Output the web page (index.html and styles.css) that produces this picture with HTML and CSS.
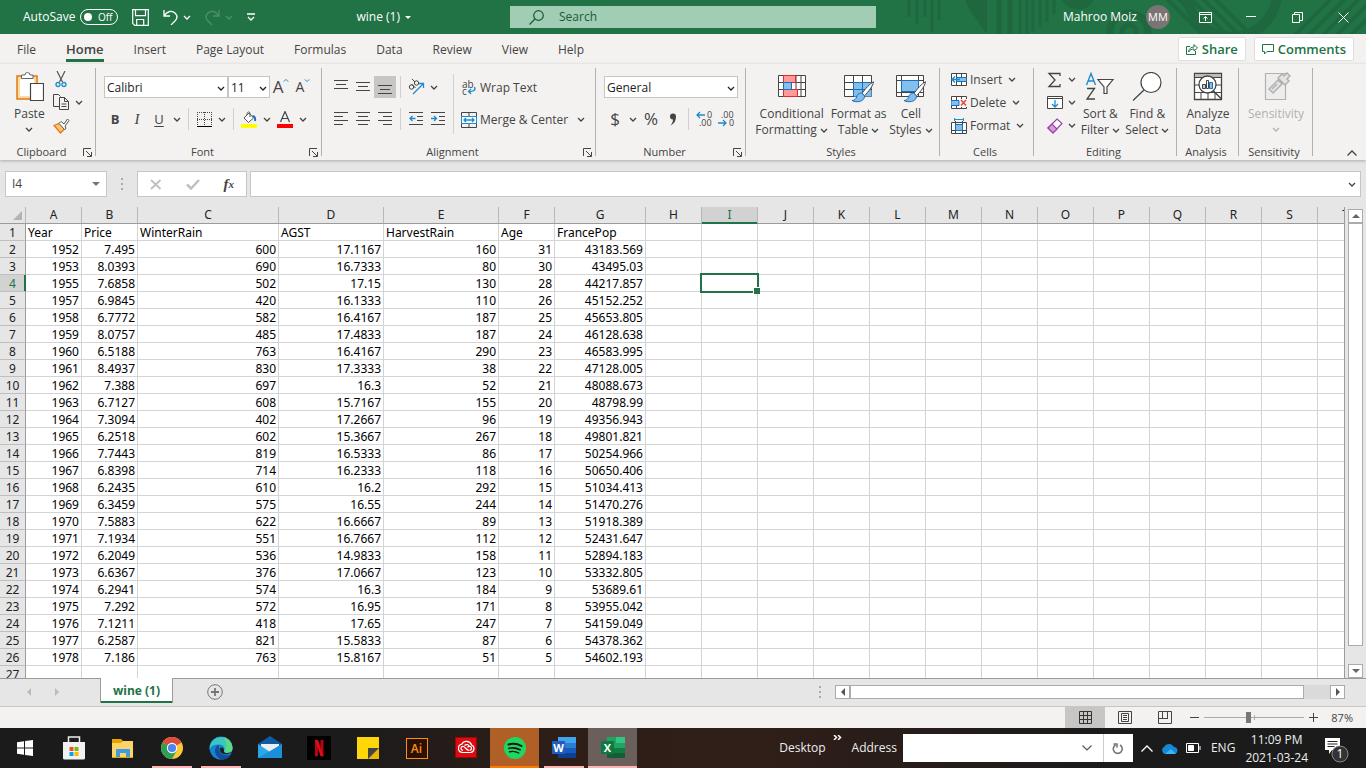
FILE: index.html
```html
<!DOCTYPE html>
<html lang="en">

<head>
    <meta charset="UTF-8">
    <meta name="viewport" content="width=device-width, initial-scale=1.0">
    <title>wine (1) - Excel</title>
    <link rel="stylesheet" href="styles.css">
    <script src="sheet.js" defer></script>
</head>

<body>
    <svg class="sprite" aria-hidden="true">
        <symbol id="chev" viewBox="0 0 8 5"><path d="M1 1l3 3 3-3" fill="none" stroke="currentColor" stroke-width="1.3"/></symbol>
        <symbol id="launch" viewBox="0 0 9 9"><path d="M.5 8V.5H8M3 3l5 5M8.5 4v4.5H4" fill="none" stroke="currentColor"/></symbol>
        <symbol id="brush" viewBox="0 0 24 22"><path d="M22.5.8C19 2.5 14 8 11 12.5l2.5 2.3C17.5 10.5 22 5 22.5.8z" fill="#fff" stroke="#444"/><path d="M10.5 12c-3 0-4.500 2-5 4S3.5 19.5 1 19.5c3 2 12 2.3 12.7-4.500z" fill="#83beec" stroke="#1b6fb8"/></symbol>
    </svg>

    <header class="titlebar">
        <svg class="titlebar-art" width="466" height="34" viewBox="900 0 466 34" aria-hidden="true">
            <g fill="none" stroke="#1f673e">
                <path d="M909 0v17M917 0v24M925 0v17M932 0v32M939 0v20" stroke-width="3"/>
                <path d="M965 0c4 10 12 20 22 34V0z" fill="#1f673e" stroke="none"/>
                <path d="M999 0v34M1010 0v34" stroke-width="5"/>
                <path d="M1020 0v34M1027 0v34M1033 0v32M1040 0v27M1047 0v22M1054 0v14" stroke-width="3"/>
                <path d="M1062 0h31c-2 11-24 14-31 0z" fill="#1f673e" stroke="none"/>
                <circle cx="1129" cy="32" r="19" stroke-width="7"/>
                <circle cx="1129" cy="32" r="7" stroke-width="5"/>
                <path d="M1166-2l38 38M1178-2l38 38M1190-2l38 38M1202-2l38 38M1214-2l38 38" stroke-width="4"/>
                <circle cx="1232" cy="-8" r="45" stroke-width="10"/>
                <path d="M1294 36l38-38M1308 36l38-38M1322 36l38-38M1336 36l38-38M1350 36l38-38" stroke-width="4"/>
            </g>
        </svg>
        <div class="title-left">
            <label class="autosave">AutoSave <input type="checkbox" class="toggle"><span class="toggle-off">Off</span></label>
            <button class="tb" aria-label="Save"><svg width="17" height="17" fill="none" stroke="currentColor" stroke-width="1.2"><path d="M.7.7h15.600v15.600H2.700l-2-2zM3.500.7v6h10v-6M4.700 16v-5.500h7V16"/></svg></button>
            <button class="tb" aria-label="Undo"><svg width="15" height="16" fill="none" stroke="currentColor" stroke-width="1.3"><path d="M1 1v6h6M1 7C4 2 9 1 12 4s2 6 0 8l-4 4"/></svg><svg class="chev"><use href="#chev"/></svg></button>
            <button class="tb faded" aria-label="Redo"><svg width="15" height="16" fill="none" stroke="currentColor" stroke-width="1.3"><path d="M14 1v6H8M14 7C11 2 6 1 3 4s-2 6 0 8l4 4"/></svg><svg class="chev"><use href="#chev"/></svg></button>
            <button class="tb" aria-label="Customize Quick Access Toolbar"><svg width="8" height="8" fill="none" stroke="currentColor" stroke-width="1.3"><path d="M0 1h8M1 4l3 3 3-3"/></svg></button>
            <button class="tb doc">wine (1) <svg width="6" height="3"><path d="M0 0h6L3 3z" fill="currentColor"/></svg></button>
        </div>
        <label class="search">
            <svg width="15" height="15" fill="none" stroke="#185c37" stroke-width="1.2"><circle cx="9.5" cy="5.5" r="4.8"/><path d="M6 9L.5 14.5"/></svg>
            <input type="search" placeholder="Search" aria-label="Search">
        </label>
        <div class="title-right">
            <span>Mahroo Moiz</span>
            <span class="avatar">MM</span>
            <button class="tb win" aria-label="Ribbon Display Options"><svg width="13" height="11" fill="none" stroke="currentColor"><path d="M.5.5h12v10H.5zM.5 2.500h12M6.500 9V4.500M4.500 6.500l2-2 2 2"/></svg></button>
            <button class="tb win" aria-label="Minimize"><svg width="10" height="2"><path d="M0 .5h10" stroke="currentColor"/></svg></button>
            <button class="tb win" aria-label="Restore"><svg width="11" height="11" fill="none" stroke="currentColor"><path d="M.5 2.500h7v8h-7zM2.500 2.500v-2h8v8h-3"/></svg></button>
            <button class="tb win" aria-label="Close"><svg width="11" height="11" stroke="currentColor"><path d="M.5.5l10 10M10.500.5l-10 10"/></svg></button>
        </div>
    </header>

    <nav class="tabs">
        <a href="#">File</a>
        <a href="#" class="active">Home</a>
        <a href="#">Insert</a>
        <a href="#">Page Layout</a>
        <a href="#">Formulas</a>
        <a href="#">Data</a>
        <a href="#">Review</a>
        <a href="#">View</a>
        <a href="#">Help</a>
        <div class="tab-actions">
            <button><svg width="12" height="12" fill="none" stroke="currentColor"><path d="M4 3.500H.5v8h9V8M2.500 9C3 5.500 5 4 8 4V1.500L11.500 5 8 8V6C5.500 6 4 7 2.500 9z"/></svg>Share</button>
            <button><svg width="12" height="11" fill="none" stroke="currentColor"><path d="M.5.5h11v7H5l-2.500 2.500V7.500h-2z"/></svg>Comments</button>
        </div>
    </nav>

    <section class="ribbon">
        <div class="group clipboard">
            <div class="group-body top">
                <button class="big"><svg width="30" height="32" fill="none"><path d="M3 4h20v23H3z" fill="#fbdc9c" stroke="#e07a1a" stroke-width="1.5"/><path d="M6 7h14v17H6z" fill="#fff"/><path d="M7.500 6.500V3H11a2.500 2.500 0 015 0h3v3.500z" fill="#fff" stroke="#666"/><path d="M16.500 11.500h13v17h-13z" fill="#fff" stroke="#444" stroke-width="1.2"/></svg>
                    <span>Paste</span><svg class="chev under"><use href="#chev"/></svg></button>
                <div class="stack">
                    <button aria-label="Cut"><svg width="16" height="17" fill="none"><path d="M4 0l5.500 11M12 0L6.500 11" stroke="#555" stroke-width="1.2"/><circle cx="5" cy="13.5" r="2" stroke="#1e8bcd" stroke-width="1.3"/><circle cx="11" cy="13.5" r="2" stroke="#1e8bcd" stroke-width="1.3"/></svg></button>
                    <button aria-label="Copy"><svg width="17" height="17" fill="none" stroke="#444"><path d="M6 12.500H.5V.5h5l2 2M6.500 3.500h5l4 4v8h-9zM11.500 3.500v4h4M8.500 10h5M8.500 12.500h5"/></svg><svg class="chev"><use href="#chev"/></svg></button>
                    <button aria-label="Format Painter"><svg width="17" height="16" fill="none"><path d="M1 7.500L7 5l5 5.500L7.500 15z" fill="#fbc46d" stroke="#e07a1a" stroke-width="1.3"/><path d="M6 5.500l2-2 3 2.500L14.500 1l1.500 1.500L12 8l1 2.500-1.500 1z" fill="#fff" stroke="#555"/></svg></button>
                </div>
            </div>
            <div class="group-name"><span>Clipboard</span><button aria-label="Clipboard options"><svg class="launch"><use href="#launch"/></svg></button></div>
        </div>

        <div class="group font">
            <div class="group-body rows">
                <div class="row">
                    <span class="pick family"><select aria-label="Font"><option>Calibri</option></select><svg class="chev"><use href="#chev"/></svg></span>
                    <span class="pick size"><select aria-label="Font size"><option>11</option></select><svg class="chev"><use href="#chev"/></svg></span>
                    <button class="ib" aria-label="Increase font size"><span class="grow">A</span><svg class="chev up"><use href="#chev"/></svg></button>
                    <button class="ib" aria-label="Decrease font size"><span class="shrink">A</span><svg class="chev blue"><use href="#chev"/></svg></button>
                </div>
                <div class="row">
                    <button class="ib bold">B</button>
                    <button class="ib italic">I</button>
                    <button class="ib underline">U</button>
                    <button class="dd" aria-label="Underline styles"><svg class="chev"><use href="#chev"/></svg></button>
                    <i class="sep"></i>
                    <button class="ib" aria-label="Borders"><svg width="15" height="15" fill="none" stroke="#444"><path d="M0 .5h15M0 7.500h15M.5 0v14M7.500 0v14M14.500 0v14" stroke-dasharray="1 1"/><path d="M0 14.500h15" stroke="#000"/></svg></button>
                    <button class="dd" aria-label="Border styles"><svg class="chev"><use href="#chev"/></svg></button>
                    <i class="sep"></i>
                    <button class="ib" aria-label="Fill color"><svg width="16" height="17" fill="none"><path d="M3 7l5-5 4.500 5-5 4.500zM6 4c0-4 3-4 3-1v3" fill="#fff" stroke="#555"/><path d="M11.500 5c2 0 3 2 2.500 5" stroke="#1b6fb8" stroke-width="2"/><path d="M0 13h16v4H0z" fill="#ff0"/></svg></button>
                    <button class="dd" aria-label="Fill colors"><svg class="chev"><use href="#chev"/></svg></button>
                    <button class="ib" aria-label="Font color"><svg width="16" height="17" fill="none"><path d="M3.500 11L8 .5 12.500 11M5 7.500h6" stroke="#444" stroke-width="1.2"/><path d="M0 13h16v4H0z" fill="#f00"/></svg></button>
                    <button class="dd" aria-label="Font colors"><svg class="chev"><use href="#chev"/></svg></button>
                </div>
            </div>
            <div class="group-name"><span>Font</span><button aria-label="Font options"><svg class="launch"><use href="#launch"/></svg></button></div>
        </div>

        <div class="group alignment">
            <div class="group-body">
                <div class="rows">
                    <div class="row">
                        <button class="ib" aria-label="Top align"><svg class="lines"><path d="M0 .5h14M2 4.500h10M0 8.500h14"/></svg></button>
                        <button class="ib" aria-label="Middle align"><svg class="lines"><path d="M0 2.500h14M2 6.500h10M0 10.500h14"/></svg></button>
                        <button class="ib on" aria-label="Bottom align"><svg class="lines"><path d="M0 5.500h14M2 9.500h10M0 13.500h14"/></svg></button>
                        <i class="sep"></i>
                        <button class="ib" aria-label="Orientation"><svg width="17" height="16" fill="none"><path d="M5 15L15 5M11 4.500h4.500V9" stroke="#1e8bcd" stroke-width="1.3"/><g stroke="#444"><circle cx="3.5" cy="8" r="2.2"/><path d="M3.500 5l4 4"/><circle cx="8.5" cy="4" r="2.2"/><path d="M4 0l3 3"/></g></svg></button>
                        <button class="dd" aria-label="Orientation styles"><svg class="chev"><use href="#chev"/></svg></button>
                    </div>
                    <div class="row">
                        <button class="ib" aria-label="Align left"><svg class="lines"><path d="M0 .5h14M0 4.500h9M0 8.500h14M0 12.500h9"/></svg></button>
                        <button class="ib" aria-label="Center"><svg class="lines"><path d="M0 .5h14M2 4.500h10M0 8.500h14M2 12.500h10"/></svg></button>
                        <button class="ib" aria-label="Align right"><svg class="lines"><path d="M0 .5h14M5 4.500h9M0 8.500h14M5 12.500h9"/></svg></button>
                        <i class="sep"></i>
                        <button class="ib" aria-label="Decrease indent"><svg class="lines"><path d="M0 .5h14M8 4.500h6M8 8.500h6M0 12.500h14"/><path d="M6.500 6.500H1M3.500 4L1 6.500 3.500 9" class="b"/></svg></button>
                        <button class="ib" aria-label="Increase indent"><svg class="lines"><path d="M0 .5h14M8 4.500h6M8 8.500h6M0 12.500h14"/><path d="M0 6.500h5.500M3 4l2.500 2.500L3 9" class="b"/></svg></button>
                    </div>
                </div>
                <i class="sep tall"></i>
                <div class="rows">
                    <button class="wide"><svg class="glyphs" width="16" height="16"><text class="abc"><tspan x="1" y="8">ab</tspan><tspan x="1" y="15">c</tspan></text><path d="M13.500 7c1.500 3-1 5-6 4.500M10 9l-2.500 2.500L10 14" fill="none" stroke="#1e8bcd" stroke-width="1.3"/></svg>Wrap Text</button>
                    <button class="wide"><svg width="16" height="16" fill="none" stroke="#444"><path d="M.5.5h15v15H.5zM8 0v4M8 12v4"/><path d="M.5 4.500h15v7H.5z" fill="#fff" stroke="#1e8bcd"/><path d="M3 8h10M5 6L3 8l2 2M11 6l2 2-2 2" stroke="#1e8bcd" stroke-width="1.3"/></svg>Merge &amp; Center<svg class="chev"><use href="#chev"/></svg></button>
                </div>
            </div>
            <div class="group-name"><span>Alignment</span><button aria-label="Alignment options"><svg class="launch"><use href="#launch"/></svg></button></div>
        </div>

        <div class="group number">
            <div class="group-body rows">
                <span class="pick format"><select aria-label="Number format"><option>General</option></select><svg class="chev"><use href="#chev"/></svg></span>
                <div class="row">
                    <button class="ib sym">$</button>
                    <button class="dd" aria-label="Currency"><svg class="chev"><use href="#chev"/></svg></button>
                    <button class="ib sym">%</button>
                    <button class="ib" aria-label="Comma style"><svg width="8" height="13"><path d="M1 3.500a3 3 0 016 0C7 8 5 11 1.500 12.500 3.500 10 4 8 4 6.500a3 3 0 01-3-3z" fill="#444"/></svg></button>
                    <i class="sep"></i>
                    <button class="ib" aria-label="Increase decimal"><svg class="glyphs" width="16" height="16"><text class="dec"><tspan x="11" y="7">0</tspan><tspan x="3" y="15">.00</tspan></text><path d="M9 4H1M4 1L1 4l3 3" class="arrow"/></svg></button>
                    <button class="ib" aria-label="Decrease decimal"><svg class="glyphs" width="16" height="16"><text class="dec"><tspan x="3" y="7">.00</tspan><tspan x="11" y="15">0</tspan></text><path d="M0 12h8M5 9l3 3-3 3" class="arrow"/></svg></button>
                </div>
            </div>
            <div class="group-name"><span>Number</span><button aria-label="Number options"><svg class="launch"><use href="#launch"/></svg></button></div>
        </div>

        <div class="group styles">
            <div class="group-body top">
                <button class="big"><svg width="30" height="32" fill="none"><path d="M1.500 3.500h27v21h-27z" fill="#fff" stroke="#444"/><path d="M6.500 3v22M19 3v22M24 3v22M1 10.500h28M1 17.500h28" stroke="#444"/><path d="M6.500 3.500h12v7h-12zM6.500 17.500h14v7h-14z" fill="#ff9a9a" stroke="#e02b2b"/><path d="M6.500 10.500h8v7h-8z" fill="#83beec" stroke="#1b6fb8"/></svg>
                    <span>Conditional<br>Formatting <svg class="chev"><use href="#chev"/></svg></span></button>
                <button class="big"><svg width="32" height="32" fill="none"><path d="M1.500 3.500h27v21h-27z" fill="#fff" stroke="#444"/><path d="M10.500 10.500h18v14h-18z" fill="#83beec"/><path d="M10.500 3v22M19.500 3v22M1 10.500h28M1 17.500h28" stroke="#444"/><path d="M10.500 24V10.500h18M19.500 10v14M10 17.500h18" stroke="#1b6fb8"/><use href="#brush" x="8" y="9" width="24" height="22"/></svg>
                    <span>Format as<br>Table <svg class="chev"><use href="#chev"/></svg></span></button>
                <button class="big"><svg width="32" height="32" fill="none"><path d="M1.500 3.500h27v21h-27z" fill="#fff" stroke="#444"/><path d="M6.500 3v22M23.500 3v22M1 8.500h28M1 20.500h28" stroke="#444"/><path d="M6.500 8.500h17v11h-17z" fill="#83beec" stroke="#1b6fb8"/><use href="#brush" x="8" y="9" width="24" height="22"/></svg>
                    <span>Cell<br>Styles <svg class="chev"><use href="#chev"/></svg></span></button>
            </div>
            <div class="group-name"><span>Styles</span></div>
        </div>

        <div class="group cells">
            <div class="group-body stack">
                <button><svg width="16" height="16" fill="none"><path d="M.5 1.500h15v12H.5zM5.500 1v13M10.500 1v13" fill="#fff" stroke="#444"/><path d="M5.500 5.500h10v4h-10z" fill="#83beec" stroke="#1b6fb8"/><path d="M9 7.500H1M4 4.500l-3 3 3 3" stroke="#1e8bcd" stroke-width="1.5"/></svg>Insert <svg class="chev"><use href="#chev"/></svg></button>
                <button><svg width="16" height="16" fill="none"><path d="M.5 1.500h15v12H.5zM5.500 1v13M10.500 1v13" fill="#fff" stroke="#444"/><path d="M0 5.500h8v5H0z" fill="#83beec" stroke="#1b6fb8"/><path d="M9 4h7v8H9z" fill="#f3f2f1"/><path d="M10 5l5 5.500M15 5l-5 5.500" stroke="#e8443a" stroke-width="1.4"/></svg>Delete <svg class="chev"><use href="#chev"/></svg></button>
                <button><svg width="16" height="16" fill="none"><path d="M.5 4.500h15v11H.5zM4.500 3v13M11.500 3v13M0 12.500h16" fill="#fff" stroke="#444"/><path d="M4.500 6.500h7v6h-7z" fill="#83beec" stroke="#1b6fb8"/><path d="M3 1.500h10M3.500 0v3M12.500 0v3" stroke="#1e8bcd"/></svg>Format <svg class="chev"><use href="#chev"/></svg></button>
            </div>
            <div class="group-name"><span>Cells</span></div>
        </div>

        <div class="group editing">
            <div class="group-body top">
                <div class="stack">
                    <button aria-label="AutoSum"><svg width="16" height="16" fill="none"><path d="M13 4V1.500H2L8 8l-6 6.500h11V12" stroke="#444" stroke-width="1.3"/></svg><svg class="chev"><use href="#chev"/></svg></button>
                    <button aria-label="Fill"><svg width="16" height="16" fill="none"><path d="M.5 1.500h15v12H.5zM0 3.500h16" fill="#fff" stroke="#444"/><path d="M8 5v7M5 9l3 3 3-3" stroke="#1e8bcd" stroke-width="1.3"/></svg><svg class="chev"><use href="#chev"/></svg></button>
                    <button aria-label="Clear"><svg width="16" height="16" fill="none" stroke="#9b3fa8" stroke-width="1.2"><path d="M1 10L10 1l5 4.500-9 9.500z" fill="#fff"/><path d="M1 10l4-4 5 5-4 4z" fill="#d59ddb"/></svg><svg class="chev"><use href="#chev"/></svg></button>
                </div>
                <button class="big"><svg width="30" height="32" fill="none"><path d="M1.500 13L6 1.500 10.500 13M3 9h6" stroke="#1e8bcd" stroke-width="1.4"/><path d="M2 16.500h7.500L2 27h8" stroke="#444" stroke-width="1.3"/><path d="M13 7.500h15L22 15v6.500h-3V15z" fill="#fff" stroke="#444" stroke-width="1.2"/></svg>
                    <span>Sort &amp;<br>Filter <svg class="chev"><use href="#chev"/></svg></span></button>
                <button class="big"><svg width="30" height="32" fill="none"><circle cx="19" cy="10.5" r="10" fill="#fff" stroke="#444" stroke-width="1.2"/><path d="M12 18L1 28.500" stroke="#444" stroke-width="1.3"/></svg>
                    <span>Find &amp;<br>Select <svg class="chev"><use href="#chev"/></svg></span></button>
            </div>
            <div class="group-name"><span>Editing</span></div>
        </div>

        <div class="group analysis">
            <div class="group-body top">
                <button class="big"><svg width="30" height="32" fill="none"><path d="M1.500 1.500h27v26h-27z" fill="#fff" stroke="#444" stroke-width="1.3"/><path d="M2 2h26v3H2z" fill="#bbb"/><path d="M1 5.500h28M1 13h28M1 20.500h28M8 20v8M15 20v8M22 20v8" stroke="#444"/><circle cx="14.5" cy="12.5" r="8.5" fill="#fff" stroke="#444" stroke-width="1.3"/><path d="M20.500 19l8 8" stroke="#444" stroke-width="1.5"/><path d="M9.500 12.500h3v4h-3z" fill="#ccc" stroke="#444"/><path d="M13.500 8.500h2v8h-2z" fill="#fff" stroke="#444"/><path d="M16.500 10.500h3v6h-3z" fill="#83beec" stroke="#1b6fb8"/></svg>
                    <span>Analyze<br>Data</span></button>
            </div>
            <div class="group-name"><span>Analysis</span></div>
        </div>

        <div class="group sensitivity">
            <div class="group-body top">
                <button class="big" disabled><svg width="30" height="32" fill="none" stroke="#b1b1b1" stroke-width="1.2"><path d="M4.500 1.500h20v26h-20z" fill="#ededed"/><path d="M8 17l9-9 4 4-9 9zM11 17l5-5M17 6l4-4 2 2 3-3 3 3-3 3 2 2-4 4z" fill="#e3e3e3" stroke-width="1.5"/></svg>
                    <span>Sensitivity</span><svg class="chev under"><use href="#chev"/></svg></button>
            </div>
            <div class="group-name"><span>Sensitivity</span></div>
        </div>
        <button class="collapse" aria-label="Collapse the Ribbon"><svg width="10" height="6" fill="none" stroke="currentColor" stroke-width="1.3"><path d="M.5 5.500L5 1l4.500 4.500"/></svg></button>
    </section>

    <section class="formula-bar">
        <div class="namebox"><input value="I4" aria-label="Name Box"><svg width="8" height="4"><path d="M0 0h8L4 4z" fill="#777"/></svg></div>
        <svg class="dots"><path d="M1 0v2M1 5v2M1 10v2"/></svg>
        <div class="entry">
            <button disabled aria-label="Cancel"><svg width="12" height="11" stroke="#c0c0c0" stroke-width="1.8"><path d="M1 1l9.500 9M10.500 1L1 10"/></svg></button>
            <button disabled aria-label="Enter"><svg width="14" height="11" fill="none" stroke="#c0c0c0" stroke-width="2.5"><path d="M1 5.500L5 9.500 13 1"/></svg></button>
            <button class="fx" aria-label="Insert Function">f<sub>x</sub></button>
        </div>
        <div class="formula"><input aria-label="Formula"><svg class="chev"><use href="#chev"/></svg></div>
    </section>

    <main class="workspace">
        <div class="grid">
            <table>
                <colgroup></colgroup>
                <thead></thead>
                <tbody></tbody>
            </table>
        </div>
        <div class="vscroll">
            <button aria-label="Scroll up"><svg width="8" height="4"><path d="M0 4h8L4 0z" fill="#666"/></svg></button>
            <div class="vthumb"></div>
            <button aria-label="Scroll down"><svg width="8" height="4"><path d="M0 0h8L4 4z" fill="#666"/></svg></button>
        </div>
    </main>

    <section class="sheetbar">
        <div class="sheet-nav">
            <svg width="4" height="8"><path d="M4 0v8L0 4z" fill="#bbb"/></svg>
            <svg width="4" height="8"><path d="M0 0v8l4-4z" fill="#bbb"/></svg>
        </div>
        <button class="sheet-tab">wine (1)</button>
        <button class="add-sheet" aria-label="New sheet"><svg width="16" height="16" fill="none" stroke="#777"><circle cx="8" cy="8" r="7.3"/><path d="M8 4v8M4 8h8" stroke-width="1.8"/></svg></button>
        <svg class="dots"><path d="M1 0v2M1 5v2M1 10v2"/></svg>
        <div class="hscroll">
            <button aria-label="Scroll left"><svg width="4" height="8"><path d="M4 0v8L0 4z" fill="#555"/></svg></button>
            <div class="hthumb"></div>
            <button aria-label="Scroll right"><svg width="4" height="8"><path d="M0 0v8l4-4z" fill="#555"/></svg></button>
        </div>
    </section>

    <section class="statusbar">
        <button class="on" aria-label="Normal"><svg width="13" height="13" fill="none" stroke="#333"><path d="M.5.5h12v12H.5zM4.500 0v13M8.500 0v13M0 4.500h13M0 8.500h13"/></svg></button>
        <button aria-label="Page Layout view"><svg width="14" height="13" fill="none" stroke="#444"><path d="M.5.5h13v12H.5zM3.500 2.500h7v8h-7zM5 4.500h4M5 6.500h4M5 8.500h4"/></svg></button>
        <button aria-label="Page Break Preview"><svg width="14" height="13" fill="none" stroke="#444"><path d="M.5.5h13v12H.5zM4.500 0v7M9.500 0v7M0 7.500h10"/></svg></button>
        <button class="zoom-step" aria-label="Zoom out"><svg width="9" height="9" stroke="#444"><path d="M0 4.500h9"/></svg></button>
        <input type="range" min="10" max="170" value="80" aria-label="Zoom">
        <button class="zoom-step" aria-label="Zoom in"><svg width="9" height="9" stroke="#444"><path d="M0 4.500h9M4.500 0v9"/></svg></button>
        <span class="zoom">87%</span>
    </section>

    <footer class="taskbar">
        <button aria-label="Start"><svg width="16" height="16" fill="#fff"><path d="M0 2.200l7-1v6.300H0zM8 1.100L16 0v7.500H8zM0 8.500h7v6.300l-7-1zM8 8.500h8V16l-8-1.100z"/></svg></button>
        <button aria-label="Microsoft Store"><svg width="24" height="24"><path d="M6.500 7V1h11v6" fill="none" stroke="#eee" stroke-width="1.5"/><path d="M1 6h22v16a1.500 1.500 0 01-1.500 1.500h-19A1.500 1.500 0 011 22z" fill="#f1f1f1"/><path d="M7.500 11h4v4h-4z" fill="#f25022"/><path d="M12.500 11h4v4h-4z" fill="#7fba00"/><path d="M7.500 16h4v4h-4z" fill="#00a4ef"/><path d="M12.500 16h4v4h-4z" fill="#ffb900"/></svg></button>
        <button aria-label="File Explorer"><svg width="24" height="24"><path d="M1 3h9l2 2h10v17H1z" fill="#e8a200"/><path d="M1 7h9l2-2h10v16H1z" fill="#fbd568"/><path d="M5 21v-7a1 1 0 011-1h12a1 1 0 011 1v7h-4v-4H9v4z" fill="#3f9be0"/></svg></button>
        <button class="open" aria-label="Chrome"><svg width="24" height="24"><circle cx="12" cy="12" r="11" fill="#fbc934"/><path d="M12 12L2.500 6.500A11 11 0 0121.500 6.500z" fill="#dd4b3e"/><path d="M12 12L2.500 6.500A11 11 0 0012 23l4.500-8z" fill="#2f9e57"/><circle cx="12" cy="12" r="5.2" fill="#fff"/><circle cx="12" cy="12" r="4.1" fill="#4a86ee"/></svg></button>
        <button class="open" aria-label="Edge"><svg width="24" height="24"><circle cx="12" cy="12" r="11.5" fill="#1583d0"/><path d="M.8 10A11.500 11.500 0 0123.500 12c0 4-3 5-6 5-2.500 0-3.500-1-2.500-2.500 1.500-3-1-6-5-6S2 9 .8 14z" fill="#3cc6c0"/><path d="M14 1c6 1 9.500 6 9.500 11s-6 6-8 4c3-4 2-12-1.500-15z" fill="#66dd72" opacity=".8"/><path d="M9 9c-6 5-2 13 4 14.400C19 24 22 19 22 18c-3 2-9 2-11-2s0-6-2-7z" fill="#134d98"/><path d="M11 12c-1 4 3 7 7 6 3-.5 4-1.500 4.500-2C18 18 14 17 15 14.500c.5-2-2-4-4-2.500z" fill="#1d1d1d"/></svg></button>
        <button aria-label="Mail"><svg width="24" height="24"><path d="M0 8l12-8 12 8v4H0z" fill="#0f5aa5"/><path d="M3 8h18v9H3z" fill="#eee"/><path d="M0 8l12 8 12-8v14H0z" fill="#29a8ea"/><path d="M0 22l24-14v14z" fill="#1b90da"/></svg></button>
        <button aria-label="Netflix"><svg width="24" height="24"><path d="M0 0h24v24H0z" fill="#000"/><path d="M8 4h3v16l-3 .5zM13.500 4h3v16.500l-3-.5z" fill="#b20710"/><path d="M8 4h3l5.500 16.500-3-.5z" fill="#e50914"/></svg></button>
        <button aria-label="Sticky Notes"><svg width="24" height="24"><path d="M1 1h22v22H1z" fill="#ffd60a"/><path d="M12 12h11v11H12z" fill="#e9b800"/><path d="M12 12h11L12 23z" fill="#444"/></svg></button>
        <button aria-label="Illustrator"><span class="ai">Ai</span></button>
        <button aria-label="Creative Cloud"><svg width="22" height="22" fill="none" stroke="#fff" stroke-width="1.2"><path d="M.5.5h21v20H.5z" fill="#d90d12" stroke="#a00"/><path d="M7.500 15.500a4.200 4.200 0 01-.7-8.300A5.300 5.300 0 0116.500 8a3.900 3.900 0 01-1 7.500zM8 13.300a2 2 0 010-4c2 0 3 4 6 4M14.500 13.300a2 2 0 000-4c-1 0-1.500.5-2 1M9.500 8.500c2-2 4-.5 5 .8"/></svg></button>
        <button class="spotify" aria-label="Spotify"><svg width="24" height="24" fill="none" stroke="#191414" stroke-linecap="round"><circle cx="12" cy="12" r="11" fill="#1ed760" stroke="none"/><path d="M5.500 8.500c4-1.200 9-.8 13 1.500" stroke-width="2"/><path d="M6 12.300c4-1 7.500-.5 11 1.500" stroke-width="1.7"/><path d="M6.500 15.800c3-.8 6.500-.4 9.300 1.200" stroke-width="1.4"/></svg></button>
        <button class="open" aria-label="Word"><svg width="24" height="24"><path d="M6 1h18v6H6z" fill="#41a5ee"/><path d="M6 7h18v5H6z" fill="#2b7cd3"/><path d="M6 12h18v5H6z" fill="#185abd"/><path d="M6 17h18v5H6z" fill="#103f91"/><path d="M0 5h13v13H0z" fill="#1f5dc0"/><text x="6.5" y="15.5" class="app">W</text></svg></button>
        <button class="current" aria-label="Excel"><svg width="24" height="24"><path d="M6 1h9v11H6z" fill="#21a366"/><path d="M15 1h9v6h-9z" fill="#33c481"/><path d="M15 7h9v5h-9z" fill="#21a366"/><path d="M6 12h9v5H6zM15 12h9v5h-9z" fill="#107c41"/><path d="M6 17h18v5H6z" fill="#185c37"/><path d="M0 5h13v13H0z" fill="#0f7a3f"/><text x="6.5" y="15.5" class="app">X</text></svg></button>

        <div class="tray">
            <span>Desktop</span>
            <span class="more"><svg width="9" height="5" fill="none" stroke="#fff" stroke-width="1.5"><path d="M1 0l2.500 2.500L1 5M5 0l2.500 2.500L5 5"/></svg></span>
            <label for="address">Address</label>
            <div class="address"><input id="address"><svg width="10" height="6" fill="none" stroke="#555" stroke-width="1.2"><path d="M.5.5L5 5 9.500.5"/></svg></div>
            <button class="refresh" aria-label="Refresh"><svg width="12" height="13" fill="none" stroke="#777" stroke-width="1.6"><path d="M3.500 3A4.500 4.500 0 108 3M1.500 2h3.500v3.500"/></svg></button>
            <button class="icon" aria-label="Show hidden icons"><svg width="12" height="7" fill="none" stroke="#fff" stroke-width="1.3"><path d="M.5 6.500L6 1l5.500 5.500"/></svg></button>
            <svg class="icon" width="17" height="11"><path d="M4 11a4 4 0 01-.5-7.500A5.500 5.500 0 0113 4a3.600 3.600 0 011 7z" fill="#1489d8"/><path d="M4 11l6-5 5 5z" fill="#3fb4f2"/></svg>
            <svg class="icon" width="15" height="10" fill="none" stroke="#fff"><path d="M.5.5h12v9H.5zM14 3v4"/><path d="M2.500 2.500h5v5h-5z" fill="#fff"/></svg>
            <span class="lang">ENG</span>
            <div class="clock">11:09 PM<br>2021-03-24</div>
            <button class="notify" aria-label="Notifications"><svg width="25" height="25"><path d="M0 0h15v12H7l-3 4v-4H0z" fill="#fff"/><path d="M2.500 3.500h10M2.500 6h10M2.500 8.500h7" stroke="#222"/><circle cx="15" cy="16" r="8" fill="#333" stroke="#888"/><text x="15" y="20" class="count">1</text></svg></button>
        </div>
    </footer>
</body>

</html>
```
FILE: styles.css
```css
* {
    box-sizing: border-box;
}

body {
    margin: 0;
    height: 100vh;
    display: flex;
    flex-direction: column;
    overflow: hidden;
    font-family: "Open Sans", "Noto Sans", sans-serif;
    font-size: 12px;
    line-height: 16px;
    color: #444;
    background: #e6e6e6;
}

button,
input,
select {
    font: inherit;
    color: inherit;
    border: 0;
    padding: 0;
    margin: 0;
    background: none;
    min-width: 0;
}

button {
    display: flex;
    align-items: center;
    justify-content: center;
    white-space: nowrap;
}

input {
    outline: 0;
}

svg {
    flex: none;
}

.sprite {
    display: none;
}

.chev {
    width: 8px;
    height: 5px;
}

/* title bar */
.titlebar {
    position: relative;
    flex: none;
    height: 34px;
    display: grid;
    grid-template-columns: 510fr 366fr 490fr;
    align-items: center;
    background: #217346;
    color: #fff;
}

.titlebar-art {
    position: absolute;
    top: 0;
    right: 0;
}

.title-left,
.title-right {
    position: relative;
    display: flex;
    align-items: center;
}

.title-left {
    padding-left: 23px;
    gap: 14px;
}

.tb {
    gap: 5px;
}

.autosave {
    position: relative;
    display: flex;
    align-items: center;
    gap: 5px;
}

.toggle {
    appearance: none;
    width: 38px;
    height: 16px;
    border: 1px solid #fff;
    border-radius: 8px;
    padding: 3px;
}

.toggle::before {
    content: "";
    display: block;
    width: 8px;
    height: 8px;
    border-radius: 50%;
    background: #fff;
}

.toggle-off {
    position: absolute;
    right: 6px;
    font-size: 10px;
}

.faded {
    color: #4d9069;
}

.doc {
    margin-left: auto;
    margin-right: 99px;
}

.search {
    position: relative;
    height: 22px;
    display: flex;
    align-items: center;
    gap: 15px;
    padding-left: 19px;
    background: #a0cdb4;
}

.search input {
    flex: 1;
}

.search input::placeholder {
    color: #185c37;
    opacity: 1;
}

.title-right {
    justify-content: flex-end;
}

.avatar {
    width: 24px;
    height: 24px;
    margin: 0 12px 0 9px;
    border-radius: 50%;
    background: #7a7574;
    line-height: 24px;
    text-align: center;
    font-size: 11px;
}

.win {
    width: 46px;
    height: 34px;
}

/* ribbon tabs */
.tabs {
    flex: none;
    height: 30px;
    display: flex;
    gap: 30px;
    padding: 0 12px 0 17px;
    background: #f3f2f1;
}

.tabs a {
    height: 28px;
    line-height: 31px;
    color: #444;
    text-decoration: none;
}

.tabs a.active {
    font-size: 13px;
    font-weight: 600;
    border-bottom: 3px solid #217346;
}

.tab-actions {
    margin-left: auto;
    display: flex;
    gap: 8px;
    padding-top: 3px;
}

.tab-actions button {
    height: 24px;
    gap: 4px;
    padding: 0 7px;
    background: #fff;
    border: 1px solid #e1dfdd;
    border-radius: 2px;
    color: #217346;
    font-size: 13px;
    font-weight: 600;
}

/* ribbon */
.ribbon {
    flex: none;
    height: 96px;
    display: flex;
    padding-top: 4px;
    background: #f3f2f1;
    box-shadow: 0 1px 3px #aaa;
}

.group {
    position: relative;
    flex: none;
    display: flex;
    flex-direction: column;
    justify-content: space-between;
    height: 92px;
}

.group::after {
    content: "";
    position: absolute;
    top: 0;
    right: 0;
    width: 1px;
    height: 88px;
    background: #b3b0ad;
}

.clipboard {
    width: 96px;
}

.font {
    width: 226px;
}

.alignment {
    width: 274px;
}

.number {
    width: 150px;
}

.styles {
    width: 194px;
}

.cells {
    width: 94px;
}

.editing {
    width: 143px;
}

.analysis {
    width: 62px;
}

.sensitivity {
    width: 74px;
}

.group-body {
    display: flex;
    padding: 0 8px;
}

.group-body.top {
    justify-content: space-around;
    align-items: flex-start;
}

.clipboard .group-body.top {
    justify-content: flex-start;
    gap: 8px;
    padding-left: 14px;
}

.styles .group-body {
    padding: 0 6px 0 8px;
}

.editing .group-body {
    padding: 0 5px 0 10px;
}

.analysis .group-body,
.sensitivity .group-body {
    padding: 0;
}

.group-name {
    display: flex;
    height: 16px;
    font-size: 11px;
    padding-right: 4px;
}

.group-name span {
    flex: 1;
    text-align: center;
}

.group-name button {
    width: 9px;
}

.launch {
    width: 9px;
    height: 9px;
}

.rows {
    display: flex;
    flex-direction: column;
    gap: 10px;
    padding-top: 8px;
}

.row {
    display: flex;
    height: 22px;
}

.ib {
    position: relative;
    width: 22px;
    height: 22px;
}

.ib.on {
    background: #c8c6c4;
}

.dd {
    width: 14px;
}

.sep {
    width: 1px;
    margin: 0 4px;
    background: #d2d0ce;
}

.sep.tall {
    margin-top: 6px;
    height: 60px;
}

.bold {
    font-size: 13px;
    font-weight: 700;
}

.italic {
    font-family: "Liberation Serif", serif;
    font-size: 15px;
    font-style: italic;
}

.underline {
    font-size: 13px;
    text-decoration: underline;
    text-underline-offset: 2px;
}

.grow {
    font-size: 17px;
}

.shrink {
    font-size: 14px;
}

.ib .up,
.ib .blue {
    width: 6px;
    align-self: flex-start;
    margin-top: 2px;
    color: #1e8bcd;
}

.ib .up {
    transform: rotate(180deg);
}

.sym {
    font-size: 17px;
}

.lines {
    width: 14px;
    height: 14px;
    fill: none;
    stroke: #444;
}

.lines .b,
.arrow {
    fill: none;
    stroke: #1e8bcd;
    stroke-width: 1.3px;
}

.glyphs {
    overflow: visible;
}

.abc {
    font-size: 10px;
    fill: #444;
}

.dec {
    font-size: 9px;
    fill: #444;
}

.wide {
    height: 22px;
    gap: 3px;
    padding: 1px 0 0 3px;
    justify-content: flex-start;
}

.wide .chev {
    margin-left: 6px;
}

.pick {
    position: relative;
    height: 22px;
    background: #fff;
    border: 1px solid #c8c6c4;
    color: #222;
}

.pick select {
    appearance: none;
    width: 100%;
    height: 20px;
    padding: 1px 0 0 2px;
}

.pick .chev {
    position: absolute;
    right: 2px;
    top: 9px;
    pointer-events: none;
}

.family {
    width: 124px;
}

.size {
    width: 42px;
}

.format {
    width: 134px;
}

.big {
    flex-direction: column;
    padding-top: 4px;
    line-height: 16px;
}

.big:disabled {
    color: #b1b1b1;
}

.big > span {
    padding-top: 2px;
}

.big .under {
    margin-top: 5px;
}

.big span .chev {
    vertical-align: middle;
}

.stack {
    display: flex;
    flex-direction: column;
    align-items: flex-start;
}

.stack button {
    height: 23px;
    gap: 5px;
}

.cells .stack {
    padding-left: 11px;
}

.cells .stack button {
    gap: 3px;
}

.cells .stack .chev {
    margin-left: 3px;
}

.collapse {
    margin: auto 9px 4px auto;
}

/* formula bar */
.formula-bar {
    flex: none;
    height: 47px;
    display: flex;
    align-items: flex-start;
    padding: 11px 5px 0;
}

.namebox,
.entry,
.formula {
    height: 26px;
    display: flex;
    align-items: center;
    background: #fff;
    border: 1px solid #c6c6c6;
}

.namebox {
    width: 102px;
    padding: 0 6px;
}

.namebox input,
.formula input {
    flex: 1;
}

.dots {
    width: 2px;
    height: 12px;
    margin: 7px 14px;
    stroke: #aaa;
    stroke-width: 2px;
}

.entry {
    width: 110px;
    justify-content: space-around;
    margin-right: 3px;
}

.fx {
    font-family: "Liberation Serif", serif;
    font-style: italic;
    font-weight: 700;
    font-size: 15px;
}

.fx sub {
    font-size: 11px;
}

.formula {
    flex: 1;
    padding: 0 4px;
}

/* worksheet */
.workspace {
    flex: 1;
    min-height: 0;
    display: flex;
}

.grid {
    flex: 1;
    min-width: 0;
    overflow: hidden;
    border-right: 1px solid #9b9b9b;
    font-family: "Noto Sans", "Open Sans", sans-serif;
}

.grid table {
    table-layout: fixed;
    width: 0;
    border-collapse: separate;
    border-spacing: 0;
    color: #000;
}

.grid th,
.grid td {
    height: 17px;
    padding: 2px 2px 0;
    line-height: 14px;
    white-space: nowrap;
    border-right: 1px solid #d4d4d4;
    border-bottom: 1px solid #d4d4d4;
}

.grid td {
    position: relative;
    background: #fff;
    text-align: right;
}

.grid td.text {
    text-align: left;
}

.grid th {
    padding: 2px 0 0;
    background: #e6e6e6;
    border-right-color: #b8b8b8;
    border-bottom-color: #9b9b9b;
    color: #222;
    font-weight: 400;
    text-align: center;
}

.grid thead th {
    padding: 0;
    line-height: 16px;
}

.grid tbody th {
    border-right-color: #9b9b9b;
    border-bottom-color: #bfbfbf;
}

.grid th.current {
    background: #d2d2d2;
    color: #217346;
}

.grid thead th.current {
    box-shadow: inset 0 -1px #217346;
    border-bottom-color: #217346;
}

.grid tbody th.current {
    box-shadow: inset -1px 0 #217346;
    border-right-color: #217346;
}

.corner svg {
    display: block;
    margin-left: 13px;
}

.grid td.selected::before {
    content: "";
    position: absolute;
    z-index: 1;
    inset: -2px;
    border: 2px solid #217346;
}

.grid td.selected::after {
    content: "";
    position: absolute;
    z-index: 2;
    right: -3px;
    bottom: -3px;
    width: 6px;
    height: 6px;
    background: #217346;
    border: solid #fff;
    border-width: 1px 0 0 1px;
}

.vscroll {
    width: 21px;
    display: flex;
    flex-direction: column;
    padding: 2px 3px 0;
}

.vscroll button,
.hscroll button {
    flex: none;
    width: 15px;
    height: 14px;
    background: #fff;
    border: 1px solid #ababab;
}

.vthumb {
    flex: 1;
    background: #fff;
    border: 1px solid #ababab;
    margin-bottom: 18px;
}

/* sheet tabs */
.sheetbar {
    flex: none;
    height: 29px;
    display: flex;
    align-items: flex-start;
    border-top: 1px solid #9b9b9b;
    border-bottom: 1px solid #c6c6c6;
    padding-right: 21px;
}

.sheet-nav {
    width: 100px;
    display: flex;
    gap: 24px;
    padding: 9px 0 0 27px;
}

.sheet-tab {
    height: 25px;
    margin-top: -1px;
    padding: 1px 12px 0;
    background: #fff;
    border: 1px solid #9b9b9b;
    border-width: 0 1px;
    box-shadow: inset 0 -2px #217346;
    color: #217346;
    font-weight: 700;
}

.add-sheet {
    margin: 5px auto 0 34px;
}

.hscroll {
    width: 510px;
    display: flex;
    margin-top: 6px;
    background: #dadada;
}

.hthumb {
    flex: 1;
    background: #fff;
    border: 1px solid #ababab;
    margin-right: 26px;
}

/* status bar */
.statusbar {
    flex: none;
    height: 21px;
    display: flex;
    align-items: center;
    justify-content: flex-end;
    padding-right: 13px;
    background: #f3f2f1;
}

.statusbar button {
    width: 40px;
    height: 21px;
}

.statusbar button.on {
    background: #c8c6c4;
}

.statusbar .zoom-step {
    width: 19px;
}

.statusbar input {
    appearance: none;
    width: 100px;
    height: 12px;
    background: linear-gradient(#aaa, #aaa) center / 100% 1px no-repeat, linear-gradient(#aaa, #aaa) center / 1px 5px no-repeat;
}

.statusbar input::-webkit-slider-thumb {
    appearance: none;
    width: 5px;
    height: 11px;
    background: #777;
}

.zoom {
    margin-left: 8px;
    font-size: 11px;
}

/* taskbar */
.taskbar {
    flex: none;
    height: 40px;
    display: flex;
    background: linear-gradient(90deg, #1b1b1b 25%, #2f1e18 42%, #301e18 56%, #1b1b1b 80%);
    color: #eee;
}

.taskbar > button {
    width: 49px;
}

.taskbar .open {
    background: linear-gradient(#ffb3b3, #ffb3b3) center bottom / 40px 2px no-repeat;
}

.taskbar .spotify {
    background: #b06026;
    box-shadow: inset 0 -2px #ff7800;
}

.taskbar .current {
    background: #6b5f5c;
    box-shadow: inset 0 -2px #ffb3b3;
}

.ai {
    width: 22px;
    height: 21px;
    border: 1px solid #ff8b1a;
    background: #291300;
    color: #ff8b1a;
    line-height: 19px;
    font-weight: 600;
}

.app {
    fill: #fff;
    font-size: 11px;
    font-weight: 700;
    text-anchor: middle;
}

.tray {
    margin-left: auto;
    display: flex;
    align-items: center;
    padding-right: 16px;
}

.more {
    align-self: flex-start;
    display: flex;
    margin: 0 10px 0 7px;
    padding-top: 7px;
}

.address {
    width: 201px;
    height: 28px;
    display: flex;
    align-items: center;
    margin-left: 6px;
    padding-right: 11px;
    background: #fff;
    border-right: 1px solid #ccc;
    color: #000;
}

.address input {
    flex: 1;
}

.refresh {
    width: 29px;
    height: 28px;
    background: #fff;
}

.tray .icon {
    margin-left: 8px;
}

.lang {
    margin-left: 10px;
}

.clock {
    margin: 0 17px 0 10px;
    padding-top: 2px;
    line-height: 18px;
    text-align: center;
}

.notify {
    padding-top: 4px;
}

.count {
    fill: #fff;
    font-size: 12px;
    text-anchor: middle;
}
```
FILE: sheet.js
```js
// column widths: A-G hold data, the rest use the default width
const widths = [56, 56, 141, 105, 115, 56, 91];
const defaultWidth = 56;
const columns = 'ABCDEFGHIJKLMNOPQRST'.split('');
const rowCount = 27;
const selected = { column: 'I', row: 4 };

const data = [
    ['Year', 'Price', 'WinterRain', 'AGST', 'HarvestRain', 'Age', 'FrancePop'],
    [1952, 7.495, 600, 17.1167, 160, 31, 43183.569],
    [1953, 8.0393, 690, 16.7333, 80, 30, 43495.03],
    [1955, 7.6858, 502, 17.15, 130, 28, 44217.857],
    [1957, 6.9845, 420, 16.1333, 110, 26, 45152.252],
    [1958, 6.7772, 582, 16.4167, 187, 25, 45653.805],
    [1959, 8.0757, 485, 17.4833, 187, 24, 46128.638],
    [1960, 6.5188, 763, 16.4167, 290, 23, 46583.995],
    [1961, 8.4937, 830, 17.3333, 38, 22, 47128.005],
    [1962, 7.388, 697, 16.3, 52, 21, 48088.673],
    [1963, 6.7127, 608, 15.7167, 155, 20, 48798.99],
    [1964, 7.3094, 402, 17.2667, 96, 19, 49356.943],
    [1965, 6.2518, 602, 15.3667, 267, 18, 49801.821],
    [1966, 7.7443, 819, 16.5333, 86, 17, 50254.966],
    [1967, 6.8398, 714, 16.2333, 118, 16, 50650.406],
    [1968, 6.2435, 610, 16.2, 292, 15, 51034.413],
    [1969, 6.3459, 575, 16.55, 244, 14, 51470.276],
    [1970, 7.5883, 622, 16.6667, 89, 13, 51918.389],
    [1971, 7.1934, 551, 16.7667, 112, 12, 52431.647],
    [1972, 6.2049, 536, 14.9833, 158, 11, 52894.183],
    [1973, 6.6367, 376, 17.0667, 123, 10, 53332.805],
    [1974, 6.2941, 574, 16.3, 184, 9, 53689.61],
    [1975, 7.292, 572, 16.95, 171, 8, 53955.042],
    [1976, 7.1211, 418, 17.65, 247, 7, 54159.049],
    [1977, 6.2587, 821, 15.5833, 87, 6, 54378.362],
    [1978, 7.186, 763, 15.8167, 51, 5, 54602.193]
];

const table = document.querySelector('.grid table');

table.querySelector('colgroup').innerHTML = '<col style="width:26px">' +
    columns.map((c, i) => `<col style="width:${widths[i] || defaultWidth}px">`).join('');

const triangle = '<svg width="9" height="9"><path d="M9 0v9H0z" fill="#b3b3b3"/></svg>';
table.querySelector('thead').innerHTML = `<tr><th class="corner">${triangle}</th>` +
    columns.map(c => `<th${c === selected.column ? ' class="current"' : ''}>${c}</th>`).join('') + '</tr>';

let rows = '';
for (let r = 1; r <= rowCount; r++) {
    rows += `<tr><th${r === selected.row ? ' class="current"' : ''}>${r}</th>`;
    columns.forEach((c, i) => {
        const value = data[r - 1] && data[r - 1][i];
        let name = '';
        if (typeof value === 'string') name = ' class="text"';
        if (c === selected.column && r === selected.row) name = ' class="selected"';
        rows += `<td${name}>${value === undefined ? '' : value}</td>`;
    });
    rows += '</tr>';
}
table.querySelector('tbody').innerHTML = rows;
```
